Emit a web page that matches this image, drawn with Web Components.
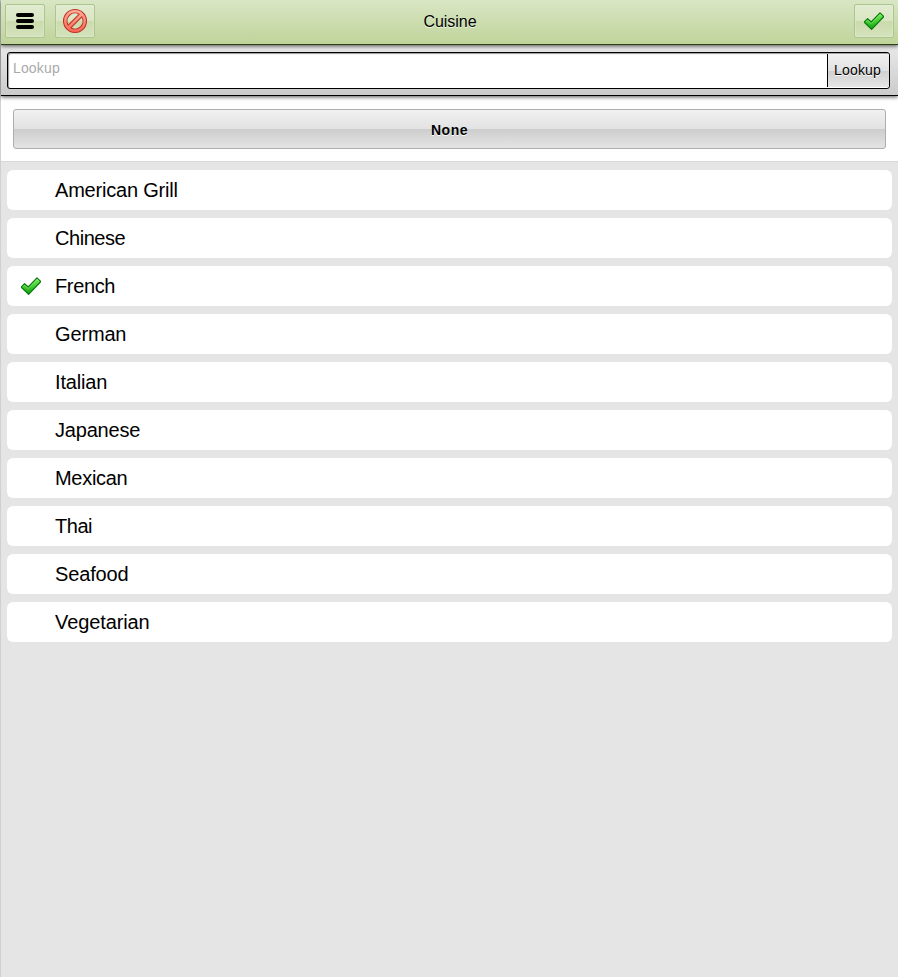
<!DOCTYPE html>
<html lang="en"><head><meta charset="utf-8"><title>Cuisine</title>
<style>html,body{margin:0;height:100%}body{font-family:"Liberation Sans",Arial,sans-serif;color:#000;overflow:hidden}</style></head>
<body><cuisine-page></cuisine-page>
<script>
const define = (name, html) => customElements.define(name, class extends HTMLElement {
  constructor() {
    super();
    const t = document.createElement('template');
    t.innerHTML = '<style>*{box-sizing:border-box}</style>' + html;
    this.attachShadow({mode: 'open'}).append(t.content.cloneNode(true));
  }
});

define('check-icon', `<style>:host{display:block;width:22px;height:20px}svg{display:block}</style>
<svg width="22" height="20" viewBox="0 0 22 20"><defs><linearGradient id="g" x1="0" y1="0" x2="0" y2="1"><stop offset="0" stop-color="#7be85c"/><stop offset=".5" stop-color="#45cf33"/><stop offset="1" stop-color="#0f9c0e"/></linearGradient></defs>
<path d="M1.6 10.6 L4.6 7.7 L8.2 11 L17 1.9 L20.4 5.1 L20.4 6 L8.6 18.4 L1.6 11.5Z" fill="url(#g)" stroke="#067a0c" stroke-width="1.2" stroke-linejoin="round"/>
<path d="M2.8 10.8 L4.6 9.2 L8.2 12.5 L17 3.4 L19 5.2" fill="none" stroke="#a2f585" stroke-width=".8" opacity=".7"/></svg>`);

define('menu-icon', `<style>:host{display:block}svg{display:block}</style>
<svg width="18" height="16" viewBox="0 0 18 16"><g><rect width="18" height="4" rx="2"/><rect y="6" width="18" height="4" rx="2"/><rect y="12" width="18" height="4" rx="2"/></g></svg>`);

define('cancel-icon', `<style>:host{display:block}svg{display:block}</style>
<svg width="26" height="26" viewBox="0 0 26 26"><defs><linearGradient id="r" x1="0" y1="0" x2="0" y2="1"><stop offset="0" stop-color="#ffb09c"/><stop offset="1" stop-color="#fb6552"/></linearGradient></defs>
<path fill-rule="evenodd" d="M13 1.5A11.5 11.5 0 1 1 13 24.5A11.5 11.5 0 1 1 13 1.5ZM6.2 17.2L17.2 6.2A8 8 0 0 0 6.2 17.2ZM8.8 19.8A8 8 0 0 0 19.8 8.8Z" fill="url(#r)" stroke="#bd3529" stroke-width="1.1" stroke-linejoin="round"/></svg>`);

define('tool-button', `<style>:host{display:flex;align-items:center;justify-content:center;box-sizing:border-box;width:40px;height:34px;border:1px solid #adc690;border-radius:2px;background:linear-gradient(#e1ebd0 0,#dae6c3 50%,#cbdbac 50%,#d5e3bd 100%);box-shadow:inset 0 0 0 1px #e3edd366}</style><slot></slot>`);

define('title-bar', `<style>:host{display:grid;grid-template-columns:1fr auto 1fr;box-sizing:border-box;height:45px;padding:4px 4px 0;border-bottom:1px solid #2e4016;background:linear-gradient(#d9e6c4,#bfd49a);position:relative;z-index:2;box-shadow:0 1px 4px #000a}
.left{display:flex;gap:10px}.right{display:flex;justify-content:flex-end}h1{margin:0;padding-left:1px;font-size:16px;letter-spacing:-.05px;font-weight:400;line-height:36px;text-shadow:0 1px 0 #eef5e0}</style>
<div class="left"><slot name="left"></slot></div><h1><slot></slot></h1><div class="right"><slot name="right"></slot></div>`);

define('lookup-bar', `<style>:host{display:block;box-sizing:border-box;height:51px;padding:7px 8px 0 6px;border-bottom:1px solid #000;background:linear-gradient(#e9e9e9,#cbcbcb);position:relative;z-index:1;box-shadow:0 1px 4px #000a}
.field{display:flex;height:37px;border:1px solid #000;border-radius:3px;background:#fff;overflow:hidden;box-shadow:inset 1px 1px 1px #999}
.hint{flex:1;padding-left:5px;font-size:14px;letter-spacing:.15px;line-height:31px;color:#a9a9a9}
.go{width:62px;margin:1px 0;padding-right:2px;border-left:1px solid #000;background:linear-gradient(#f1f1f1 0,#e2e2e2 50%,#cfcfcf 50%,#e6e6e6 100%);text-align:center;font-size:14px;letter-spacing:.15px;line-height:33px;text-shadow:0 1px 0 #fff}</style>
<div class="field"><div class="hint">Lookup</div><div class="go">Lookup</div></div>`);

define('none-panel', `<style>:host{display:block;box-sizing:border-box;height:66px;padding:13px 12px 0;background:#fff;border-bottom:1px solid #d9d9d9}
.btn{height:40px;border:1px solid #adadad;border-radius:3px;background:linear-gradient(#f1f1f1 0,#e2e2e2 50%,#cdcdcd 50%,#e4e4e4 100%);text-align:center;font-size:14px;letter-spacing:.5px;font-weight:700;line-height:40px;text-shadow:0 1px 0 #fff}</style>
<div class="btn"><slot></slot></div>`);

define('list-item', `<style>:host{display:flex;align-items:center;height:40px;border-radius:6px;background:#fff;font-size:20px;line-height:40px}
.mark{width:48px;padding-left:13px}</style><div class="mark"><slot name="mark"></slot></div><slot></slot>`);

const cuisines = [['American Grill',-.2],['Chinese',-.45],['French',-.35],['German',-.15],['Italian',-.15],['Japanese',-.2],['Mexican',-.3],['Thai',-.45],['Seafood',-.15],['Vegetarian',-.1]];
define('cuisine-page', `<style>:host{display:block;box-sizing:border-box;height:100%;border-left:1px solid #d0d0d0;background:#e5e5e5}
.list{display:flex;flex-direction:column;gap:8px;padding:8px 6px}</style>
<title-bar><tool-button slot="left"><menu-icon></menu-icon></tool-button><tool-button slot="left"><cancel-icon></cancel-icon></tool-button>Cuisine<tool-button slot="right"><check-icon></check-icon></tool-button></title-bar>
<lookup-bar></lookup-bar><none-panel>None</none-panel>
<div class="list">${cuisines.map(([n, s]) => `<list-item style="letter-spacing:${s}px">${n === 'French' ? '<check-icon slot="mark"></check-icon>' : ''}${n}</list-item>`).join('')}</div>`);
</script></body></html>
